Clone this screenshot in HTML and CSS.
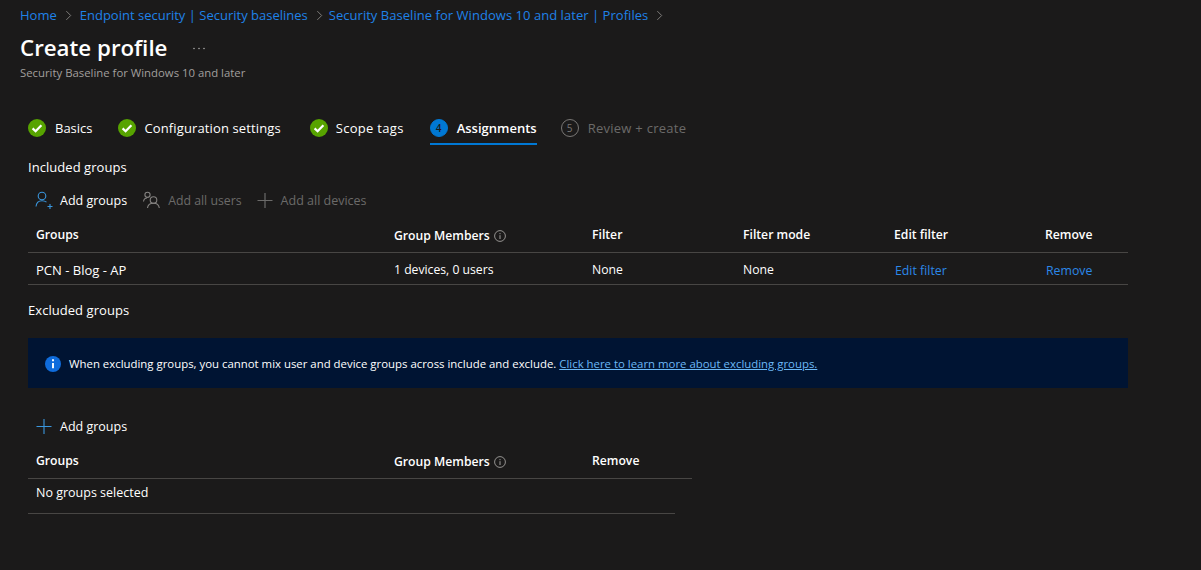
FILE: index.html
```html
<!DOCTYPE html>
<html lang="en">
<head>
<meta charset="utf-8">
<title>Create profile</title>
<link rel="stylesheet" href="styles.css">
</head>
<body>
<svg class="defs" width="0" height="0" aria-hidden="true">
  <defs>
    <symbol id="done" viewBox="0 0 18 18">
      <circle cx="9" cy="9" r="9" fill="#57a300"/>
      <path d="M4.6 9.4 7.6 12.3 13.4 6.2" fill="none" stroke="#fff" stroke-width="2.2"/>
    </symbol>
    <symbol id="info" viewBox="0 0 12 12">
      <circle cx="6" cy="6" r="5.4" fill="none" stroke="#a19f9d" stroke-width=".9"/>
      <path d="M6 5.2V9M6 3.1V4.2" fill="none" stroke="#a19f9d"/>
    </symbol>
  </defs>
</svg>
<nav class="crumbs">
  <a>Home</a>
  <svg class="chev" viewBox="0 0 8 12"><path d="M1.5 1 6.5 6 1.5 11"/></svg>
  <a>Endpoint security | Security baselines</a>
  <svg class="chev" viewBox="0 0 8 12"><path d="M1.5 1 6.5 6 1.5 11"/></svg>
  <a class="long">Security Baseline for Windows 10 and later | Profiles</a>
  <svg class="chev" viewBox="0 0 8 12"><path d="M1.5 1 6.5 6 1.5 11"/></svg>
</nav>
<header class="head">
  <div class="title-row">
    <h1>Create profile</h1>
    <svg class="more" viewBox="0 0 12 3"><circle cx="1" cy="1.5" r=".7"/><circle cx="6" cy="1.5" r=".7"/><circle cx="11" cy="1.5" r=".7"/></svg>
  </div>
  <p class="sub">Security Baseline for Windows 10 and later</p>
</header>
<main class="content">
  <div class="tabs">
    <div class="tab t1"><svg class="step"><use href="#done"/></svg><span>Basics</span></div>
    <div class="tab t2"><svg class="step"><use href="#done"/></svg><span>Configuration settings</span></div>
    <div class="tab t3"><svg class="step"><use href="#done"/></svg><span>Scope tags</span></div>
    <div class="tab active t4"><span class="num cur">4</span><span>Assignments</span></div>
    <div class="tab off"><span class="num">5</span><span>Review + create</span></div>
  </div>

  <h2 class="sec first">Included groups</h2>
  <div class="bar">
    <div class="cmd">
      <svg class="ico" viewBox="0 0 20 20" fill="none" stroke="#3a96dd" stroke-width="1.1"><circle cx="8" cy="5" r="3.8"/><path d="M2 15.5c.4-3.6 3-5.8 6-5.8 1.8 0 3.3.5 4.500 1.400M13.500 15.500h5M16 13v5"/></svg>
      <span>Add groups</span>
    </div>
    <div class="cmd dim users">
      <svg class="ico" viewBox="0 0 20 20" fill="none" stroke="#858381" stroke-width="1.1"><circle cx="6.500" cy="3.800" r="2.600"/><circle cx="12.500" cy="9" r="3.300"/><path d="M2.500 10.500c.3-2 1.500-3.500 3.500-3.500M6.500 17c.3-3 2.800-4.800 6-4.800s5.400 1.800 5.800 4.800"/></svg>
      <span>Add all users</span>
    </div>
    <div class="cmd dim devices">
      <svg class="ico" viewBox="0 0 20 20" fill="none" stroke="#6b6a69" stroke-width="1.2"><path d="M2.500 9.500h15M10 2v15"/></svg>
      <span>Add all devices</span>
    </div>
  </div>

  <div class="grid wide hdr">
    <b>Groups</b><b class="gm">Group Members<svg class="i"><use href="#info"/></svg></b><b>Filter</b><b>Filter mode</b><b>Edit filter</b><b>Remove</b>
  </div>
  <div class="grid wide row">
    <span class="pcn">PCN - Blog - AP</span><span>1 devices, 0 users</span><span>None</span><span>None</span><a class="low">Edit filter</a><a class="low">Remove</a>
  </div>

  <h2 class="sec second">Excluded groups</h2>
  <div class="banner">
    <svg class="bi" viewBox="0 0 16 16"><circle cx="8" cy="8" r="8" fill="#0f6cdc"/><path d="M8 7v5.300M8 3.300v1.900" stroke="#fff" stroke-width="1.900"/></svg>
    <span>When excluding groups, you cannot mix user and device groups across include and exclude. <a>Click here to learn more about excluding groups.</a></span>
  </div>
  <div class="bar bar2">
    <div class="cmd">
      <svg class="ico" viewBox="0 0 20 20" fill="none" stroke="#3a96dd" stroke-width="1.1"><path d="M2.500 9.500h15M10 2v15"/></svg>
      <span>Add groups</span>
    </div>
  </div>
  <div class="grid narrow hdr">
    <b>Groups</b><b class="gm">Group Members<svg class="i"><use href="#info"/></svg></b><b>Remove</b>
  </div>
  <div class="empty">No groups selected</div>
</main>
</body>
</html>
```
FILE: styles.css
```css
* { box-sizing: border-box; }
html, body { margin: 0; height: 100%; }
body {
  background: #1b1a1a;
  color: #fff;
  font: 12.5px/18px "Open Sans", "Noto Sans", sans-serif;
  overflow: hidden;
}
.defs { position: absolute; }
a { color: #2b88e8; }
.crumbs {
  display: flex;
  align-items: center;
  gap: 8px;
  padding: 6px 0 0 20px;
  height: 24px;
  font-size: 13px;
}
.crumbs a { color: #1f82e8; }
.crumbs .long { margin-left: -2px; letter-spacing: .04px; }
.chev { width: 7px; height: 11px; fill: none; stroke: #8a8886; stroke-width: 1; }
.head { padding: 9px 0 0 20px; }
.title-row { display: flex; align-items: center; height: 30px; }
h1 { margin: 0; font-size: 22.3px; line-height: 30px; font-weight: 600; }
.more { width: 12px; height: 3px; margin-left: 26px; fill: #c8c6c4; }
.sub { margin: 2px 0 0; font-size: 11.35px; line-height: 16px; color: #a19f9d; }
.content { padding: 0 0 0 28px; }
.tabs { display: flex; margin-top: 30px; height: 36px; align-items: flex-start; font-size: 13px; }
.tab { display: flex; align-items: center; gap: 9px; height: 34px; }
.t1 { margin-right: 25px; }
.t2 { margin-right: 29px; letter-spacing: .12px; }
.t3 { margin-right: 26px; gap: 8px; letter-spacing: .3px; }
.t4 { margin-right: 24px; }
.step { width: 18px; height: 18px; }
.num {
  width: 18px; height: 18px; border-radius: 50%;
  border: 1px solid #797775; color: #797775;
  font-size: 10px; line-height: 16px; text-align: center;
}
.num.cur { background: #0078d4; border-color: #0078d4; color: #1b1a1a; }
.active { font-weight: 600; border-bottom: 2px solid #0078d4; height: 34px; padding-top: 2px; }
.off { color: #6b6a69; letter-spacing: .27px; }
.sec { margin: 0; font-size: 13px; letter-spacing: .05px; font-weight: 400; line-height: 18px; }
.first { margin-top: 11px; }
.second { margin-top: 16px; }
.bar { display: flex; gap: 14px; margin-top: 11px; height: 26px; padding: 2px 0 0 6px; align-items: center; }
.cmd { display: flex; align-items: center; gap: 6px; }
.ico { width: 20px; height: 20px; }
.dim { color: #6b6a69; }
.users { gap: 7px; font-size: 12.3px; }
.devices { margin-left: -1px; }
.grid { display: grid; align-items: center; }
.wide { width: 1100px; grid-template-columns: 358px 198px 151px 151px 151px 83px; padding-left: 8px; }
.narrow { width: 664px; grid-template-columns: 358px 198px 100px; padding-left: 8px; }
.hdr { height: 40px; padding-top: 4px; border-bottom: 1px solid #484644; }
.hdr b { font-weight: 600; font-size: 12.2px; }
.row { height: 32px; padding-top: 2px; border-bottom: 1px solid #484644; font-size: 12.2px; }
.pcn { font-size: 13px; }
.low { padding: 2px 0 0 1px; font-size: 12.3px; }
.hdr .gm { display: flex; align-items: center; gap: 4px; padding-top: 2px; }
.i { width: 12px; height: 12px; }
.banner {
  display: flex; align-items: center; gap: 8px;
  width: 1100px; height: 50px; margin-top: 19px; padding: 2px 0 0 17px;
  background: #001433;
  font-size: 11.4px;
}
.banner a { color: #6cb8f6; text-decoration: underline; }
.bi { width: 16px; height: 16px; }
.bar2 { margin-top: 25px; }
.empty { width: 647px; height: 35px; padding: 0 0 6px 8px; display: flex; align-items: center; border-bottom: 1px solid #484644; }
```
